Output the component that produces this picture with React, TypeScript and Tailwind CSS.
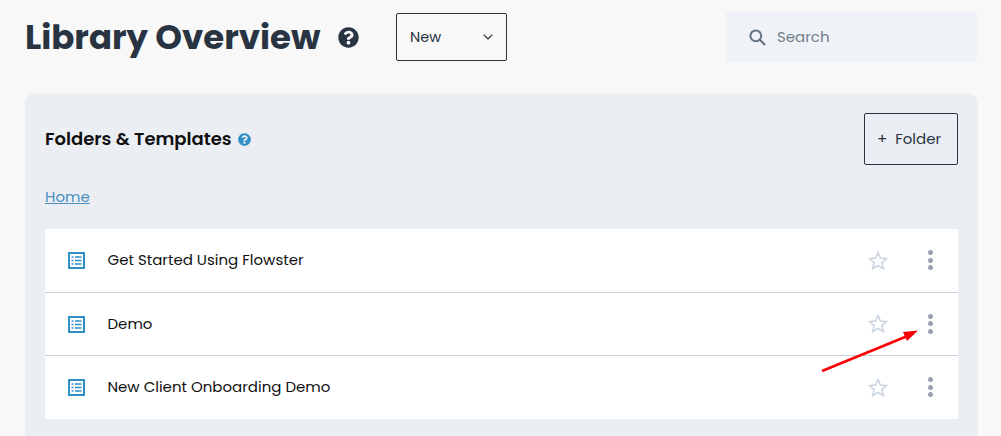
import { ChevronDown } from "lucide-react";
import { FaQuestionCircle } from "react-icons/fa";

const rows = [
  { title: "Get Started Using Flowster", height: "h-[64px] border-b border-[#c8d2dc]" },
  { title: "Demo", height: "h-[63px] border-b border-[#c8d2dc]" },
  { title: "New Client Onboarding Demo", height: "h-[63px]" },
];

function ListIcon() {
  return (
    <svg width="17" height="17" viewBox="0 0 17 17" fill="none" className="shrink-0">
      <rect x="1" y="1" width="15" height="15" fill="#fff" stroke="#2f8fc6" strokeWidth="2" />
      <path d="M7 5h6.5M7 8.5h6.5M7 12h6.5M3.5 5h2M3.5 8.5h2M3.5 12h2" stroke="#2f8fc6" strokeWidth="1.7" />
    </svg>
  );
}

function StarIcon() {
  return (
    <svg width="20" height="19" viewBox="0 0 20 19" fill="none" className="ml-auto mb-[1px] shrink-0">
      <path d="M10 1.6 L12.4 7 L18.5 7.6 L13.9 11.6 L15.3 17.6 L10 14.5 L4.7 17.6 L6.1 11.6 L1.5 7.6 L7.6 7 Z" stroke="#cbd5e0" strokeWidth="1.6" />
    </svg>
  );
}

function SearchIcon() {
  return (
    <svg width="17" height="17" viewBox="0 0 17 17" fill="none" className="shrink-0">
      <circle cx="6.8" cy="6.8" r="5.4" stroke="#667280" strokeWidth="2" />
      <path d="M10.8 10.8 L16 16" stroke="#667280" strokeWidth="2.2" />
    </svg>
  );
}

function Dots() {
  return (
    <div className="flex flex-col gap-[2.5px] mb-[1px]">
      <span className="w-[5px] h-[5px] rounded-full bg-[#98a2b0]" />
      <span className="w-[5px] h-[5px] rounded-full bg-[#98a2b0]" />
      <span className="w-[5px] h-[5px] rounded-full bg-[#98a2b0]" />
    </div>
  );
}

export default function App() {
  return (
    <div className="relative w-[1001px] h-[436px] overflow-hidden bg-[#f8f8f8] font-['Poppins','Inter','Open_Sans',sans-serif] text-[#101010]">
      <div className="flex items-center pl-[25px] pr-[24px] pt-[12px] h-[62px]">
        <h1 className="text-[34px] font-bold text-[#283442] w-[313px] whitespace-nowrap">Library Overview</h1>
        <FaQuestionCircle className="w-[21px] h-[21px] text-[#283442]" />
        <div className="ml-[37px] w-[111px] h-[48px] border border-[#283442] rounded-[2px] flex items-center justify-between pl-[13px] pr-[10px] text-[14.5px] text-[#283442]">
          <span className="pt-[1px]">New</span>
          <ChevronDown className="w-[16px] h-[16px]" strokeWidth={1.6} />
        </div>
        <div className="ml-auto w-[251px] h-[50px] bg-[#eff3f7] flex items-center gap-[11px] pl-[23px] text-[#717c88] text-[15px]">
          <SearchIcon />
          <span className="pt-[1px]">Search</span>
        </div>
      </div>
      <div className="ml-[25px] mt-[31px] w-[953px] bg-[#ebeef2] rounded-t-[10px] h-[360px] px-[20px] pt-[20px]">
        <div className="flex items-center justify-between">
          <div className="flex items-center gap-[6px] text-[18px] font-semibold leading-none">
            Folders &amp; Templates
            <FaQuestionCircle className="w-[13px] h-[13px] text-[#2f8fc6]" />
          </div>
          <div className="w-[94px] h-[52px] border border-[#283442] rounded-[2px] flex items-center justify-center gap-[8px] pr-[4px] text-[15px] text-[#283442]">
            <span>+</span> Folder
          </div>
        </div>
        <div className="mt-[20px] h-[24px] leading-[24px] text-[15px] text-[#4a8fc4] underline">Home</div>
        <div className="mt-[20px] bg-white">
          {rows.map((r) => (
            <div key={r.title} className={`flex items-center pl-[23px] pr-[25.5px] text-[15px] ${r.height}`}>
              <ListIcon />
              <span className="ml-[22.5px]">{r.title}</span>
              <StarIcon />
              <div className="ml-[39.5px]"><Dots /></div>
            </div>
          ))}
        </div>
      </div>
      <svg className="absolute left-[815px] top-[322px]" width="110" height="56" viewBox="0 0 110 56" fill="none">
        <path d="M7 49 L95 13" stroke="#f90006" strokeWidth="2.6" />
        <path d="M103 8.5 L88 10 L92 19 Z" fill="#f90006" />
      </svg>
    </div>
  );
}
